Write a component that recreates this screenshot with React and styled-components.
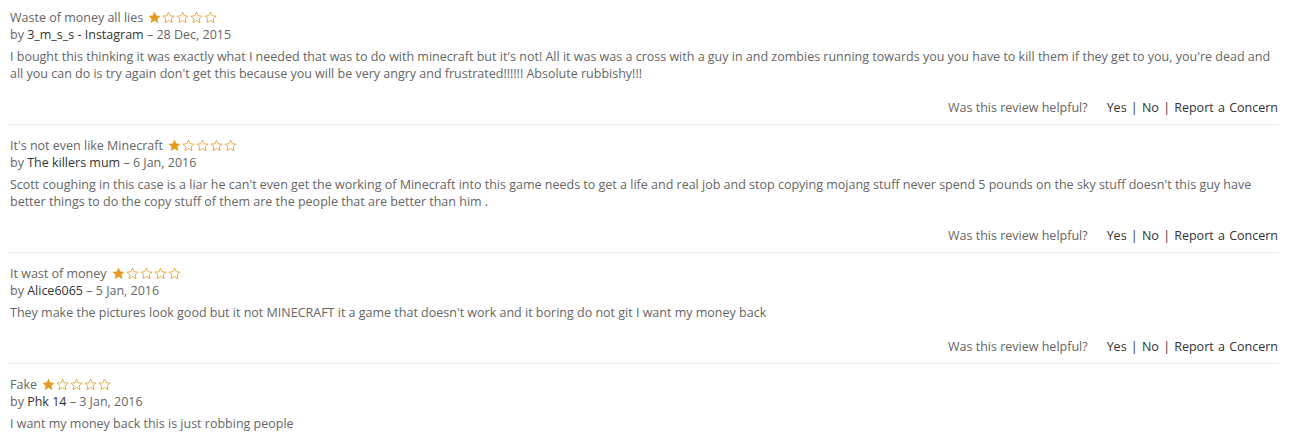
import React from "react";
import styled, { createGlobalStyle } from "styled-components";

const GlobalStyle = createGlobalStyle`
    body {
        margin: 0;
        background: #ffffff;
        font-family: "Open Sans", "Noto Sans", sans-serif;
        font-size: 12.5px;
        color: #666666;
    }
`;

const reviews = [
    {
        title: "Waste of money all lies",
        author: "3_m_s_s - Instagram",
        date: "28 Dec, 2015",
        body: "I bought this thinking it was exactly what I needed that was to do with minecraft but it's not! All it was was a cross with a guy in and zombies running towards you you have to kill them if they get to you, you're dead and all you can do is try again don't get this because you will be very angry and frustrated!!!!!! Absolute rubbishy!!!",
    },
    {
        title: "It's not even like Minecraft",
        author: "The killers mum",
        date: "6 Jan, 2016",
        body: "Scott coughing in this case is a liar he can't even get the working of Minecraft into this game needs to get a life and real job and stop copying mojang stuff never spend 5 pounds on the sky stuff doesn't this guy have better things to do the copy stuff of them are the people that are better than him .",
    },
    {
        title: "It wast of money",
        author: "Alice6065",
        date: "5 Jan, 2016",
        body: "They make the pictures look good but it not MINECRAFT it a game that doesn't work and it boring do not git I want my money back",
    },
    {
        title: "Fake",
        author: "Phk 14",
        date: "3 Jan, 2016",
        body: "I want my money back this is just robbing people",
        last: true,
    },
];

const Page = styled.div`
    padding: 9px 20px 0 8px;
`;

const Review = styled.div`
    padding: 0 0 0 2px;
    border-bottom: ${(props) => (props.last ? "none" : "1px solid #ececec")};
    margin-bottom: 12px;
`;

const Line = styled.div`
    line-height: 17px;
    white-space: nowrap;
`;

const Title = styled(Line)`
    display: flex;
    align-items: center;
    gap: 5px;
`;

const Author = styled.span`
    color: #333333;
`;

const Body = styled.p`
    margin: 5px 0 0;
    line-height: 17px;
`;

const Helpful = styled.div`
    display: flex;
    justify-content: flex-end;
    align-items: center;
    gap: 19px;
    margin-top: 17px;
    padding: 0 1px 8px 0;
    line-height: 17px;
`;

const Links = styled.span`
    color: #333333;
    word-spacing: 1px;
`;

const Stars = styled.span`
    display: inline-flex;
    gap: 1px;
`;

const StarIcon = ({ filled }) => (
    <svg width="13" height="13" viewBox="0 0 24 24">
        <path
            d="M12 2l3 6.8 7.3.7-5.5 4.8 1.6 7.2L12 17.7l-6.4 3.8 1.6-7.2-5.5-4.8 7.3-.7z"
            fill={filled ? "#e89a1c" : "none"}
            stroke="#e89a1c"
            strokeWidth={filled ? 1 : 1.5}
            strokeLinejoin="round"
        />
    </svg>
);

const Rating = ({ value }) => (
    <Stars>
        {[1, 2, 3, 4, 5].map((n) => (
            <StarIcon key={n} filled={n <= value} />
        ))}
    </Stars>
);

export default function App() {
    return (
        <Page>
            <GlobalStyle />
            {reviews.map((r) => (
                <Review key={r.title} last={r.last}>
                    <Title>
                        {r.title}
                        <Rating value={1} />
                    </Title>
                    <Line>
                        by <Author>{r.author}</Author> – {r.date}
                    </Line>
                    <Body>{r.body}</Body>
                    {!r.last && (
                        <Helpful>
                            <span>Was this review helpful?</span>
                            <Links>Yes | No | Report a Concern</Links>
                        </Helpful>
                    )}
                </Review>
            ))}
        </Page>
    );
}
